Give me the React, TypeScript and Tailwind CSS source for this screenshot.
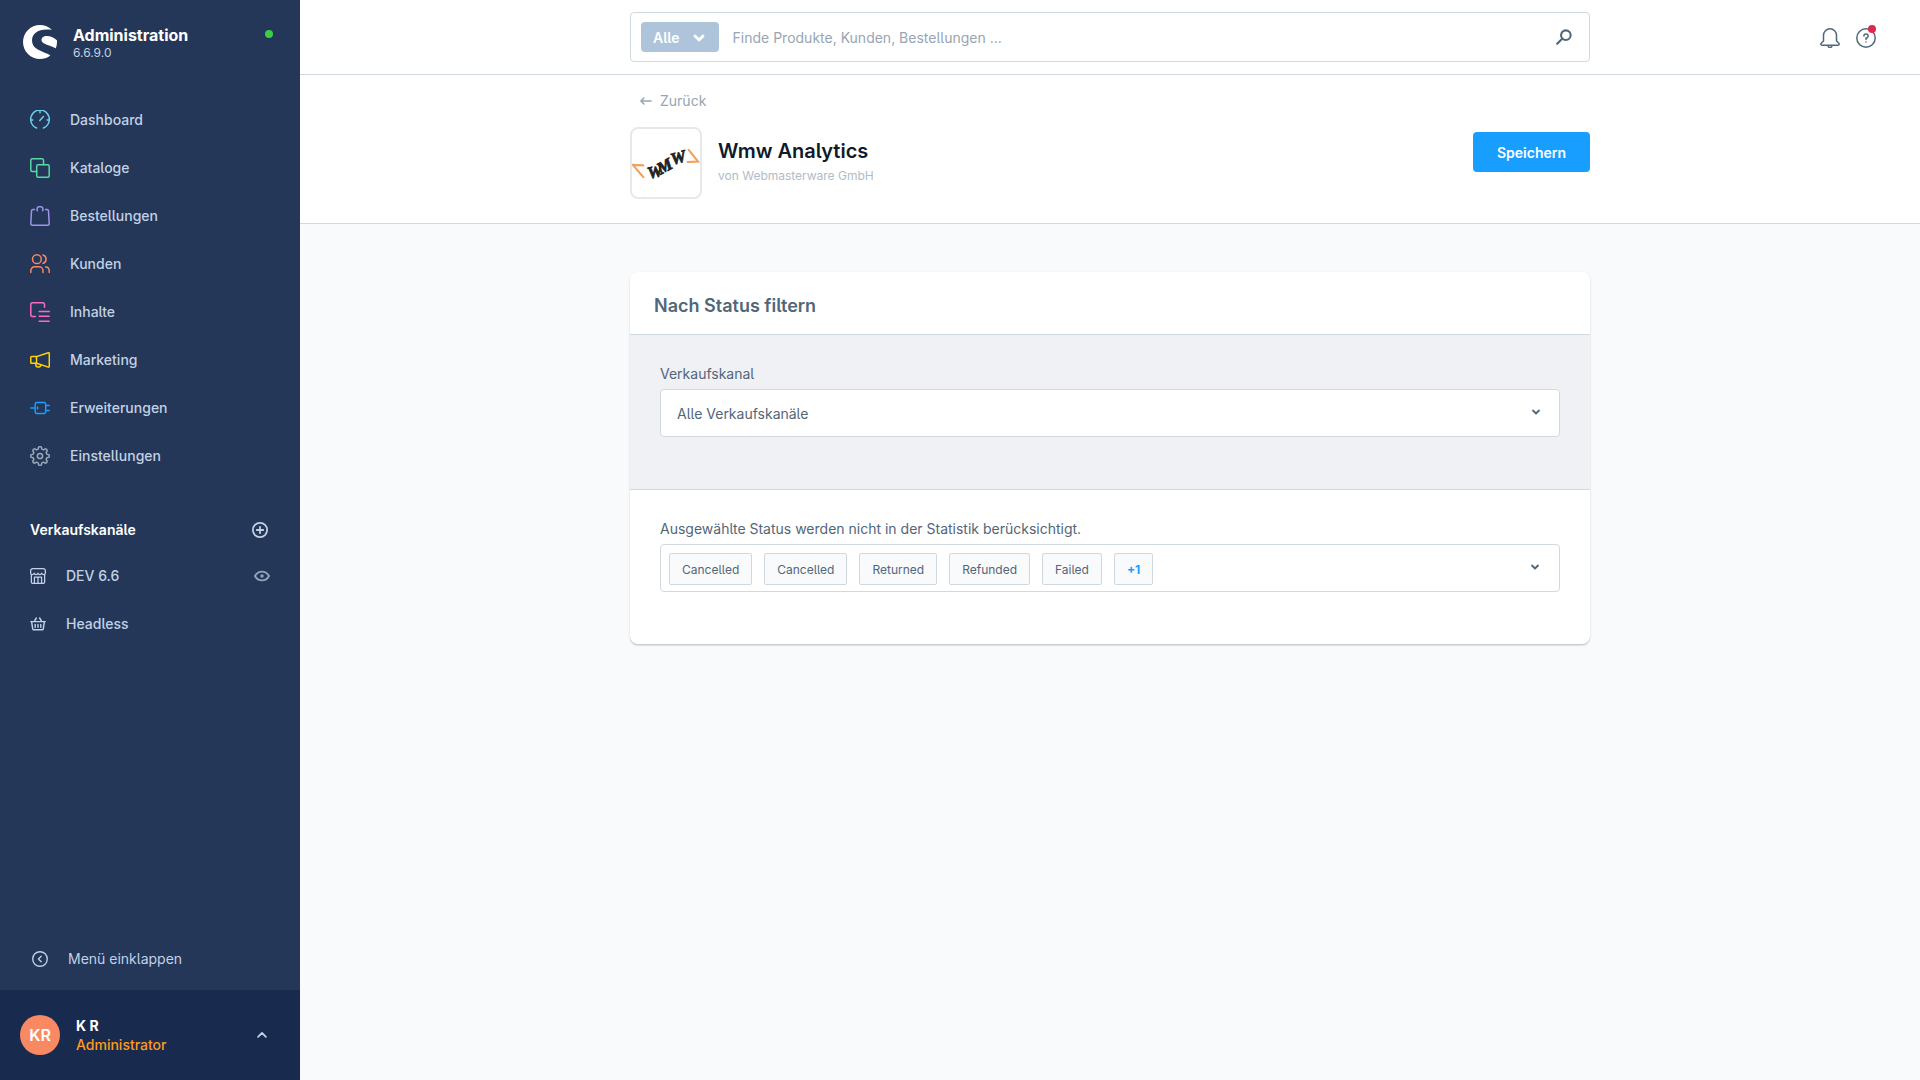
import { SiShopware } from "react-icons/si";
import type { ReactNode } from "react";

type IconProps = { children: ReactNode; className?: string; width?: number };

const Icon = ({ children, className = "w-5 h-5", width = 1.5 }: IconProps) => (
  <svg
    viewBox="0 0 20 20"
    className={`shrink-0 ${className}`}
    fill="none"
    stroke="currentColor"
    strokeWidth={width}
    strokeLinecap="round"
    strokeLinejoin="round"
    aria-hidden="true"
  >
    {children}
  </svg>
);

const ChevronDown = ({ className = "w-4 h-4", width = 3 }: { className?: string; width?: number }) => (
  <Icon className={className} width={width}>
    <path d="M5 7.5l5 5 5-5" />
  </Icon>
);

const menu = [
  {
    label: "Dashboard",
    color: "text-[#6ed0ea]",
    icon: <path d="M6.6 18A9.3 9.3 0 1 1 13.4 18M10 .8v2M.8 10h2M17.2 10h2M9.8 10.4l3.6-3.8" />,
  },
  {
    label: "Kataloge",
    color: "text-[#57d9a3]",
    icon: (
      <>
        <path d="M6.7 13.5H2.3A1.5 1.5 0 0 1 .8 12V2.3A1.5 1.5 0 0 1 2.3.8H12a1.5 1.5 0 0 1 1.5 1.5v4.4" />
        <rect x="6.7" y="6.7" width="12.5" height="12.5" rx="1.5" />
      </>
    ),
  },
  {
    label: "Bestellungen",
    color: "text-[#a092f0]",
    icon: (
      <>
        <path d="M4.5 3.5H3a1.5 1.5 0 0 0-1.5 1.3L.8 17.6a1.5 1.5 0 0 0 1.5 1.6h15.4a1.5 1.5 0 0 0 1.5-1.6l-.7-12.8A1.5 1.5 0 0 0 17 3.5h-1.5" />
        <path d="M7.2 4.8V2.7A1.9 1.9 0 0 1 9.1.8h1.8a1.9 1.9 0 0 1 1.900 1.9v2.1" />
      </>
    ),
  },
  {
    label: "Kunden",
    color: "text-[#f88962]",
    icon: (
      <>
        <circle cx="6.9" cy="5.2" r="4.4" />
        <path d="M.8 18.6v-2a3.8 3.8 0 0 1 3.8-3.8h4.600a3.8 3.8 0 0 1 3.8 3.8v2M13 1a4.4 4.4 0 0 1 0 8.4M15.6 13a3.8 3.8 0 0 1 3.6 3.8v1.8" />
      </>
    ),
  },
  {
    label: "Inhalte",
    color: "text-[#ff68c9]",
    icon: (
      <path d="M5.300 14.600H2.300A1.500 1.500 0 0 1 .8 13.100V2.300A1.500 1.500 0 0 1 2.300.8H13a1.500 1.500 0 0 1 1.500 1.500v3M9.200 9.500h10M9.200 14.300h10M9.200 19.200h10" />
    ),
  },
  {
    label: "Marketing",
    color: "text-[#ffd700]",
    icon: (
      <>
        <path d="M6.5 6.6v6.6M6.5 6.6l11.8-3.9a.8.8 0 0 1 1 .8v12.8a.8.8 0 0 1-1 .8L6.5 13.2H1.600a.8.8 0 0 1-.8-.8v-5a.8.8 0 0 1 .8-.8z" />
        <path d="M5.8 13.2v1.5A2.3 2.3 0 0 0 8.1 17h.8a2 2 0 0 0 1.900-2.200" />
      </>
    ),
  },
  {
    label: "Erweiterungen",
    color: "text-[#189eff]",
    icon: (
      <path d="M5.200 6.200a1.600 1.600 0 0 1 1.600-1.600h7.300a1.600 1.600 0 0 1 1.600 1.600v7.600a1.600 1.600 0 0 1-1.600 1.600H6.800a1.600 1.600 0 0 1-1.600-1.600zM.8 10h4.400M15.700 7.500h3.500M15.700 12.500h3.500M7.600 9v2" />
    ),
  },
  {
    label: "Einstellungen",
    color: "text-[#9aa8b5]",
    icon: (
      <>
        <path d="M8.4 1.7a1 1 0 0 1 1-.9h1.2a1 1 0 0 1 1 .9l.2 1.4 1.8.8 1.2-.9a1 1 0 0 1 1.3.1l.8.8a1 1 0 0 1 .1 1.3l-.9 1.2.8 1.8 1.4.2a1 1 0 0 1 .9 1v1.2a1 1 0 0 1-.9 1l-1.4.2-.8 1.8.9 1.2a1 1 0 0 1-.1 1.3l-.8.8a1 1 0 0 1-1.3.1l-1.2-.9-1.8.8-.2 1.4a1 1 0 0 1-1 .9H9.4a1 1 0 0 1-1-.9l-.2-1.4-1.8-.8-1.2.9a1 1 0 0 1-1.3-.1l-.8-.8a1 1 0 0 1-.1-1.3l.9-1.2-.8-1.8-1.4-.2a1 1 0 0 1-.9-1V9.4a1 1 0 0 1 .9-1l1.4-.2.8-1.8-.9-1.2a1 1 0 0 1 .1-1.3l.8-.8a1 1 0 0 1 1.3-.1l1.2.9 1.8-.8z" />
        <circle cx="10" cy="10" r="2.6" />
      </>
    ),
  },
];

const states = ["Cancelled", "Cancelled", "Returned", "Refunded", "Failed"];

const Sidebar = () => (
  <aside className="flex w-[300px] shrink-0 flex-col bg-[#243758] text-sm text-[#c2d1e5]">
    <div className="flex px-[23px] pt-6">
      <SiShopware className="mt-px h-[34px] w-[34px] shrink-0 text-white" />
      <div className="ml-4 grow">
        <div className="text-base leading-[22px] font-bold text-white">Administration</div>
        <div className="text-xs leading-[14px]">6.6.9.0</div>
      </div>
      <span className="mt-[6px] mr-1 h-2 w-2 rounded-full bg-[#37d046]" />
    </div>

    <nav className="mt-9">
      {menu.map((item) => (
        <a key={item.label} href="#" className="flex h-12 items-center pl-[30px] font-medium">
          <Icon className={`h-5 w-5 ${item.color}`}>{item.icon}</Icon>
          <span className="ml-5">{item.label}</span>
        </a>
      ))}
    </nav>

    {/* Sales channels */}
    <div className="mt-7 flex h-11 items-center justify-between pr-8 pl-[30px]">
      <h2 className="font-semibold text-white">Verkaufskanäle</h2>
      <button type="button" aria-label="Verkaufskanal hinzufügen">
        <Icon className="h-4 w-4" width={2.2}>
          <path d="M10 1.100a8.900 8.900 0 1 0 0 17.800a8.900 8.900 0 1 0 0-17.800zM10 6v8M6 10h8" />
        </Icon>
      </button>
    </div>
    <div className="flex h-12 items-center pr-[30px] pl-[30px]">
      <a href="#" className="flex grow items-center font-medium">
        <Icon className="h-4 w-4" width={1.6}>
          <path d="M1.7 8v9.6a1.6 1.6 0 0 0 1.6 1.6h13.4a1.6 1.6 0 0 0 1.6-1.6V8M.8 6.500V3.400A2.600 2.600 0 0 1 3.400.8h13.200a2.600 2.600 0 0 1 2.600 2.600v3.100c0 2-4 2.400-4.600 0c-.6 2.400-4 2.400-4.600 0c-.6 2.400-4 2.400-4.600 0c-.6 2.400-4.600 2-4.600 0zM5.500 19v-7.500h9V19M10 11.500V19" />
        </Icon>
        <span className="ml-5">DEV 6.6</span>
      </a>
      <button type="button" aria-label="Storefront öffnen" className="text-[#93a5bd]">
        <Icon className="h-4 w-4" width={2.4}>
          <path d="M1.200 10c2-3.500 5.200-5.500 8.800-5.500s6.800 2 8.800 5.500c-2 3.500-5.200 5.500-8.800 5.500S3.200 13.500 1.200 10z" />
          <circle cx="10" cy="10" r="1" fill="currentColor" />
        </Icon>
      </button>
    </div>
    <a href="#" className="flex h-12 items-center pl-[30px] font-medium">
      <Icon className="h-4 w-4" width={1.8}>
        <path d="M1 7h18M2 7l1.400 9a1.500 1.500 0 0 0 1.500 1.300h10.200a1.500 1.500 0 0 0 1.500-1.300L18 7M5.500 6.500l2.500-4M14.500 6.500l-2.500-4M6.500 10.500v3.500M10 10.500v3.500M13.500 10.500v3.500" />
      </Icon>
      <span className="ml-5">Headless</span>
    </a>

    <button type="button" className="mt-auto flex h-[62px] items-center pl-8 text-left">
      <Icon className="h-4 w-4" width={1.7}>
        <path d="M10 .9a9.100 9.100 0 1 0 0 18.200a9.100 9.100 0 1 0 0-18.200zM11.500 6.500L8 10l3.500 3.500" />
      </Icon>
      <span className="ml-5">Menü einklappen</span>
    </button>

    {/* User */}
    <button type="button" className="flex h-[90px] items-center bg-[#182b4e] pr-8 pl-5 text-left">
      <span className="flex h-10 w-10 items-center justify-center rounded-full bg-[#f88962] text-base font-semibold text-white">
        KR
      </span>
      <span className="ml-4 grow leading-[19px]">
        <span className="block font-bold text-white">K R</span>
        <span className="block font-medium text-[#ff9a1f]">Administrator</span>
      </span>
      <Icon className="h-3 w-3" width={3}>
        <path d="M3.500 13l6.500-6.500 6.500 6.500" />
      </Icon>
    </button>
  </aside>
);

const PluginLogo = () => (
  <svg
    viewBox="0 0 72 72"
    className="h-[72px] w-[72px] shrink-0 rounded-lg border-2 border-[#e6e8ea] bg-white"
    role="img"
    aria-label="Wmw"
  >
    <g fill="none" stroke="#f2a05c" strokeWidth="2.2" strokeLinecap="round">
      <path d="M12 38.500L1 38l11 13" />
      <path d="M60 22l10 12.500-11 .5" />
    </g>
    <g fontFamily="Liberation Serif, serif" fontWeight="700" fontStyle="italic" fontSize="18" fill="#222" stroke="#222" strokeWidth=".8">
      <text transform="rotate(-14 18 53)" x="18" y="53">W</text>
      <text transform="rotate(-28 31 48)" x="30" y="48">M</text>
      <text transform="rotate(-16 43 38)" x="43" y="38">W</text>
    </g>
  </svg>
);

const TopBar = () => (
  <header className="grid h-[75px] grid-cols-[1fr_minmax(0,960px)_1fr] items-center border-b border-[#d1d9e0] bg-white">
    <div className="col-start-2 flex h-[50px] items-center rounded border border-[#d1d9e0] pr-[17px] pl-[10px]">
      <button
        type="button"
        className="flex h-[30px] items-center gap-[11px] rounded bg-[#aec4da] px-3 pt-px font-semibold text-white"
      >
        Alle
        <ChevronDown width={3.5} />
      </button>
      <input
        type="text"
        aria-label="Suche"
        placeholder="Finde Produkte, Kunden, Bestellungen ..."
        className="ml-[14px] grow bg-transparent pt-[2px] outline-none placeholder:text-[#98a5b3]"
      />
      <button type="button" aria-label="Suchen" className="text-[#52667a]">
        <Icon className="h-4 w-4" width={2.6}>
          <circle cx="12.300" cy="7.700" r="6" />
          <path d="M8 12l-6.500 6.500" />
        </Icon>
      </button>
    </div>
    <div className="flex justify-end gap-4 pt-px pr-11 text-[#52667a]">
      <button type="button" aria-label="Benachrichtigungen">
        <Icon>
          <path d="M3.500 13V7.300A6.500 6.500 0 0 1 10 .8a6.500 6.500 0 0 1 6.500 6.500V13l2.300 2.300c.8.800.3 1.900-.7 1.900H1.900c-1 0-1.500-1.100-.7-1.900zM8 17.500a2 2 0 0 0 4 0" />
        </Icon>
      </button>
      <button type="button" aria-label="Hilfe" className="relative">
        <Icon>
          <circle cx="10" cy="10" r="9.200" />
          <path d="M7.900 8A2.100 2.100 0 1 1 10 10.100v1.300M10 13.900v.1" />
        </Icon>
        <span className="absolute -top-[3px] right-0 h-2 w-2 rounded-full bg-[#de294c]" />
      </button>
    </div>
  </header>
);

const PageHeader = () => (
  <div className="border-b border-[#d1d9e0] bg-white">
    <div className="mx-auto h-[148px] max-w-[960px] pt-4">
      <a href="#" className="flex items-center gap-2 pl-[10px] leading-5 text-[#98a5b3]">
        <Icon className="h-3 w-3" width={2.6}>
          <path d="M18.500 10H1.500M6.500 5l-5 5 5 5" />
        </Icon>
        Zurück
      </a>
      <div className="mt-4 flex">
        <PluginLogo />
        <div className="ml-4 grow pt-[10px]">
          <h1 className="text-xl leading-7 font-semibold text-[#0d1b2a]">Wmw Analytics</h1>
          <div className="text-xs leading-[22px] text-[#b0bcc8]">von Webmasterware GmbH</div>
        </div>
        <button
          type="button"
          className="mt-[5px] h-10 rounded bg-[#189eff] px-6 pt-[2px] font-semibold text-white"
        >
          Speichern
        </button>
      </div>
    </div>
  </div>
);

const FilterCard = () => (
  <section className="mx-auto mt-12 max-w-[960px] overflow-hidden rounded-lg bg-white text-[#52667a] shadow-[0_1px_1px_rgba(0,0,0,0.08),0_2px_1px_rgba(0,0,0,0.06),0_1px_3px_rgba(0,0,0,0.1)]">
    <h2 className="px-6 pt-[22px] pb-4 text-lg leading-6 font-semibold">Nach Status filtern</h2>
    <div className="h-[156px] border-y border-[#d1d9e0] bg-[#f0f1f5] px-[30px] pt-[27px]">
      <label htmlFor="channel" className="block leading-6">
        Verkaufskanal
      </label>
      <div className="relative mt-[3px]">
        <select
          id="channel"
          className="h-12 w-full appearance-none rounded border border-[#d1d9e0] bg-white px-4 pt-[2px]"
        >
          <option>Alle Verkaufskanäle</option>
        </select>
        <ChevronDown className="pointer-events-none absolute top-[17px] right-[18px] h-3 w-3" />
      </div>
    </div>
    <div className="h-[154px] px-[30px] pt-[27px]">
      <div className="leading-6">Ausgewählte Status werden nicht in der Statistik berücksichtigt.</div>
      <div className="mt-[3px] flex h-12 items-start rounded border border-[#d1d9e0] pt-2 pr-[18px] pl-2">
        <ul className="flex grow gap-3 text-xs">
          {states.map((state, i) => (
            <li
              key={i}
              className="flex h-8 items-center rounded-xs border border-[#d1d9e0] bg-[#f9fafb] px-3 pt-px"
            >
              {state}
            </li>
          ))}
          <li className="flex">
            <button
              type="button"
              className="h-8 rounded-xs border border-[#d1d9e0] bg-[#f9fafb] px-3 pt-px font-bold text-[#189eff]"
            >
              +1
            </button>
          </li>
        </ul>
        <ChevronDown className="mt-2 h-3 w-3" />
      </div>
    </div>
  </section>
);

const App = () => (
  <div className="flex min-h-screen bg-[#f9fafb] font-['Inter',sans-serif] text-sm [font-feature-settings:'cv05']">
    <Sidebar />
    <main className="min-w-0 grow">
      <TopBar />
      <PageHeader />
      <FilterCard />
    </main>
  </div>
);

export default App;
